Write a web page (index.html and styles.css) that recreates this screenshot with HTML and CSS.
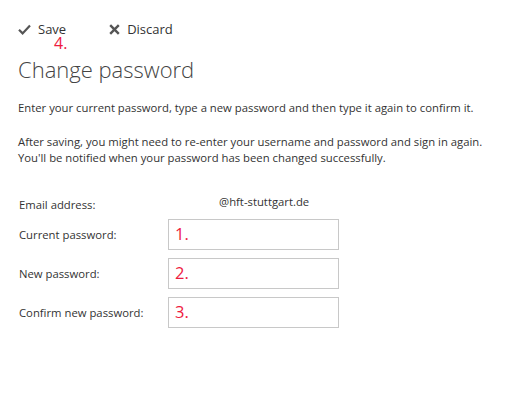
FILE: index.html
```html
<!DOCTYPE html>
<html>
<head>
<meta charset="utf-8">
<link rel="stylesheet" href="styles.css">
</head>
<body>
<div class="page">
  <div class="toolbar">
    <div class="cmd save">
      <svg class="ico" width="13" height="11" viewBox="0 0 13 11"><path d="M1 5.8 L4.6 9.4 L12 1.6" fill="none" stroke="#555" stroke-width="2.2"/></svg>
      <span>Save</span>
      <span class="mark mark4">4.</span>
    </div>
    <div class="cmd">
      <svg class="ico" width="11" height="11" viewBox="0 0 11 11"><path d="M1.2 1.2 L9.8 9.8 M9.8 1.2 L1.2 9.8" fill="none" stroke="#555" stroke-width="2.4"/></svg>
      <span>Discard</span>
    </div>
  </div>
  <h1 class="title">Change password</h1>
  <p class="text first">Enter your current password, type a new password and then type it again to confirm it.</p>
  <p class="text second">After saving, you might need to re-enter your username and password and sign in again.<br>You'll be notified when your password has been changed successfully.</p>
  <div class="form">
    <div class="label email-label">Email address:</div>
    <div class="email-value">@hft-stuttgart.de</div>
    <div class="label">Current password:</div>
    <div class="field"><span class="mark">1.</span></div>
    <div class="label">New password:</div>
    <div class="field"><span class="mark">2.</span></div>
    <div class="label">Confirm new password:</div>
    <div class="field"><span class="mark">3.</span></div>
  </div>
</div>
</body>
</html>
```
FILE: styles.css
```css
html, body {
  margin: 0;
  padding: 0;
  background: #fff;
}
.page {
  font-family: "Open Sans", "Noto Sans", sans-serif;
  color: #333;
  padding: 19px 0 0 18px;
}
.toolbar {
  display: flex;
  align-items: center;
  height: 20px;
  font-size: 13px;
  line-height: 14px;
  color: #333;
}
.cmd {
  position: relative;
  display: flex;
  align-items: center;
  gap: 7px;
}
.cmd.save {
  margin-right: 43px;
}
.ico {
  display: block;
}
.mark {
  color: #ee1a3e;
  font-size: 16.5px;
  line-height: 1;
}
.mark4 {
  position: absolute;
  left: 36px;
  top: 14px;
  font-size: 16px;
  line-height: 14px;
}
.title {
  margin: 17px 0 0 0;
  font-size: 22px;
  font-weight: 300;
  color: #444;
  line-height: 26px;
}
.text {
  margin: 0;
  font-size: 11.3px;
  line-height: 15px;
  color: #333;
}
.text.first {
  margin-top: 18px;
}
.text.second {
  margin-top: 19px;
  line-height: 16px;
}
.form {
  display: grid;
  grid-template-columns: 150px 172px;
  row-gap: 8px;
  margin-top: 31px;
  align-items: center;
}
.label {
  font-size: 11.3px;
  color: #333;
  padding-left: 1px;
}
.email-label {
  height: 14px;
}
.email-value {
  font-size: 11.3px;
  color: #333;
  padding-left: 51px;
  margin-top: -6px;
}
.field {
  height: 29px;
  border: 1px solid #c8c8c8;
  display: flex;
  align-items: center;
  padding-left: 6px;
  box-sizing: content-box;
  width: 163px;
}
```
